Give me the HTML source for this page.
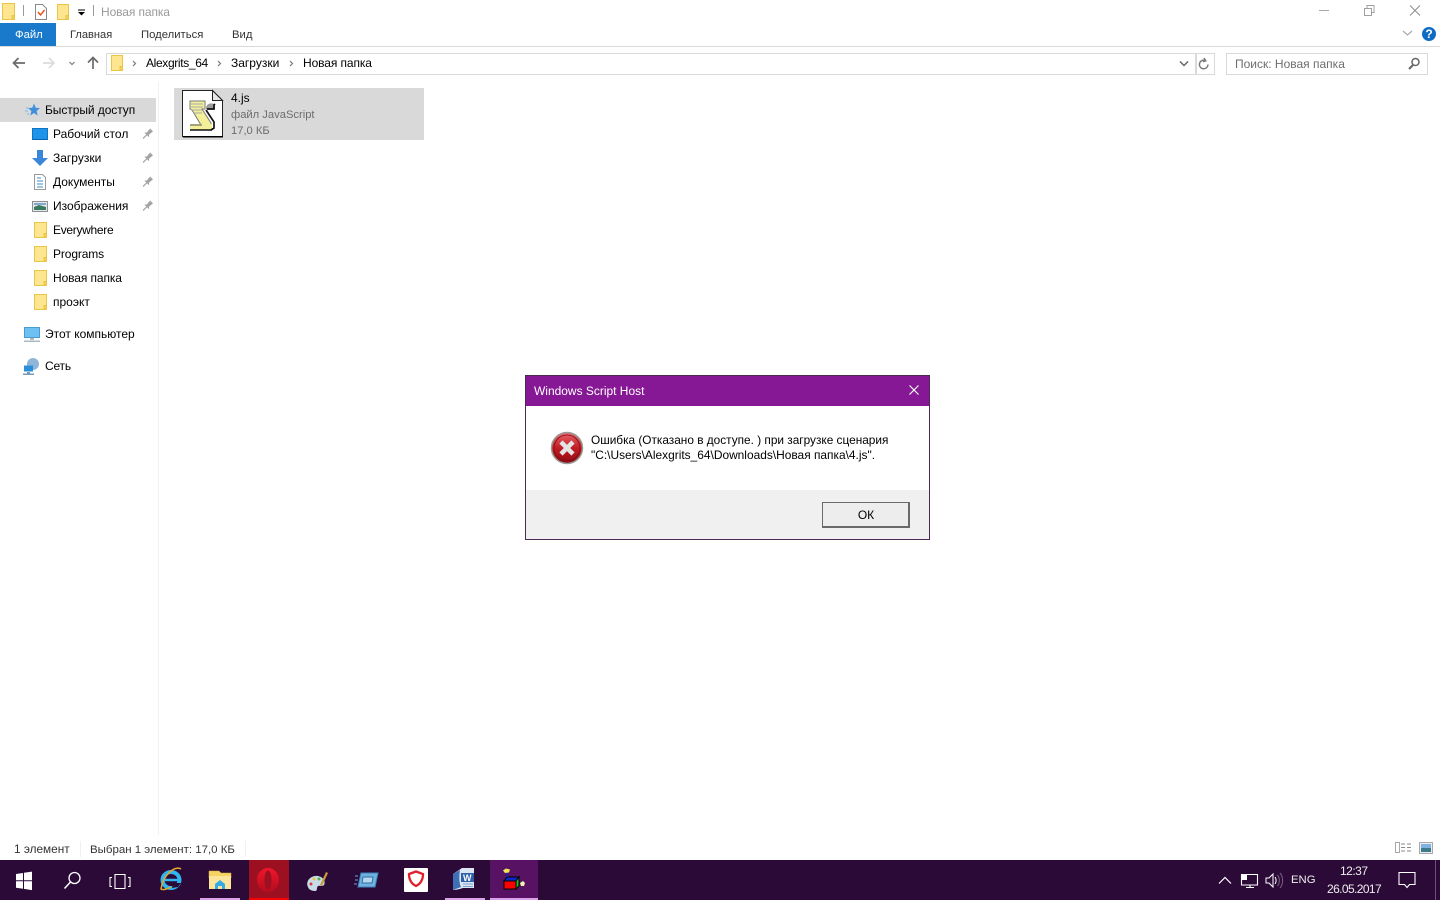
<!DOCTYPE html>
<html lang="ru"><head><meta charset="utf-8"><title>Новая папка</title>
<style>
html,body{margin:0;padding:0;width:1440px;height:900px;overflow:hidden;background:#fff}
body{position:relative;font-family:"Liberation Sans","Noto Sans CJK SC",sans-serif;font-size:12px;color:#000}
.t{position:absolute;white-space:nowrap;line-height:16px;height:16px}
.b{position:absolute}
svg{position:absolute;overflow:visible}
</style></head><body>

<!-- title bar -->
<svg style="left:0;top:0" width="100" height="24"><path d="M2.500 3.500h12v16h-12z" fill="#fde68f" stroke="#e9c445"/><path d="M12 15.500h2.500v4H12z" fill="#f3d25c" stroke="#e9c445"/><path d="M23.500 5v11" stroke="#9a9a9a"/><path d="M35.500 4.500h7l4 4v11h-11z" fill="#fff" stroke="#8a8a8a"/><path d="M38 12l2.500 3 4-5" fill="none" stroke="#e8541e" stroke-width="1.500"/><path d="M57.500 4.500h11v15h-11z" fill="#fde68f" stroke="#e9c445"/><path d="M66 15.500h2.500v4H66z" fill="#f3d25c" stroke="#e9c445"/><path d="M78 10h7" stroke="#000"/><path d="M78 12h7l-3.500 3.500z" fill="#000"/><path d="M93.500 5v11" stroke="#9a9a9a"/></svg>
<div class="t" style="left:101px;top:4px;color:#9a9a9a;letter-spacing:-.1px">Новая папка</div>
<svg style="left:1310px;top:0" width="130" height="24"><path d="M9 10.500h10" stroke="#a8a8a8"/><path d="M54.500 8.500h7v7h-7z M57 8V5.500h7v7h-2.500" fill="none" stroke="#a0a0a0"/><path d="M100 5.500l10 10M110 5.500l-10 10" stroke="#8c8c8c"/></svg>

<!-- ribbon -->
<div class="b" style="left:0;top:23px;width:56px;height:23px;background:#1979ca"></div>
<div class="t" style="left:15px;top:27px;color:#fff;font-size:11.300px">Файл</div>
<div class="t" style="left:70px;top:27px;color:#333;font-size:11.100px">Главная</div>
<div class="t" style="left:141px;top:27px;color:#333;font-size:11.300px">Поделиться</div>
<div class="t" style="left:232px;top:27px;color:#333;font-size:11.300px">Вид</div>
<div class="b" style="left:0;top:46px;width:1440px;height:1px;background:#dadada"></div>
<svg style="left:1400px;top:25px" width="40" height="20"><path d="M3 6l4.500 4L12 6" fill="none" stroke="#a8a8a8" stroke-width="1.200"/><circle cx="29" cy="9" r="7" fill="#0f6cc4"/></svg>
<div class="t" style="left:1425px;top:26px;color:#fff;font-weight:bold;font-size:12px;width:8px;text-align:center">?</div>

<!-- nav -->
<svg style="left:0;top:50px" width="105" height="26"><path d="M25 13H14M18.500 8L13.500 13l5 5" fill="none" stroke="#6b6b6b" stroke-width="1.700"/><path d="M43 13h10M49 8l5 5-5 5" fill="none" stroke="#dcdcdc" stroke-width="1.700"/><path d="M69.500 12l2.500 2.500 2.500-2.500" fill="none" stroke="#8a8a8a" stroke-width="1.300"/><path d="M93 19V8M88 12.500L93 7.500l5 5" fill="none" stroke="#6b6b6b" stroke-width="1.700"/></svg>
<div class="b" style="left:106px;top:53px;width:1089px;height:20px;border:1px solid #d9d9d9"></div>
<div class="b" style="left:1195px;top:53px;width:18px;height:20px;border:1px solid #d9d9d9"></div>
<svg style="left:110px;top:53px" width="30" height="22"><path d="M1.500 2.500h11v15h-11z" fill="#fde68f" stroke="#e9c445"/><path d="M10 13.500h2.500v4H10z" fill="#f3d25c" stroke="#e9c445"/><path d="M23 8l2.500 2.500L23 13" fill="none" stroke="#7a7a7a" stroke-width="1.200"/></svg>
<div class="t" style="left:146px;top:55px;letter-spacing:-.35px">Alexgrits_64</div>
<svg style="left:215px;top:53px" width="10" height="22"><path d="M3 8l2.500 2.500L3 13" fill="none" stroke="#7a7a7a" stroke-width="1.200"/></svg>
<div class="t" style="left:231px;top:55px">Загрузки</div>
<svg style="left:287px;top:53px" width="10" height="22"><path d="M3 8l2.500 2.500L3 13" fill="none" stroke="#7a7a7a" stroke-width="1.200"/></svg>
<div class="t" style="left:303px;top:55px;letter-spacing:-.1px">Новая папка</div>
<svg style="left:1178px;top:55px" width="34" height="20"><path d="M2 6.500l4 4 4-4" fill="none" stroke="#666" stroke-width="1.500"/><path d="M30 9.500a4.300 4.300 0 1 1-2.200-3.800M26 3l1.800 2.800-2.800 1" fill="none" stroke="#7a7a7a" stroke-width="1.400"/></svg>
<div class="b" style="left:1226px;top:53px;width:200px;height:20px;border:1px solid #d9d9d9"></div>
<div class="t" style="left:1235px;top:56px;color:#6d6d6d;font-size:12px">Поиск: Новая папка</div>
<svg style="left:1405px;top:56px" width="18" height="16"><circle cx="10.500" cy="6" r="3.500" fill="none" stroke="#666" stroke-width="1.500"/><path d="M8 9l-4 4" stroke="#666" stroke-width="2"/></svg>

<!-- sidebar -->
<div class="b" style="left:158px;top:82px;width:1px;height:753px;background:#f0f0f0"></div>
<div class="b" style="left:0;top:98px;width:156px;height:24px;background:#d9d9d9"></div>
<svg style="left:25px;top:102px" width="16" height="16"><path d="M9 1.500l1.700 4.300 4.300.3-3.400 2.900 1.100 4.500L9 11l-3.700 2.500 1.100-4.500L3 6.100l4.300-.3z" fill="#3f8fdc"/><path d="M1 6h3M0 9h3M2 12h2" stroke="#7fb5e6"/></svg>
<div class="t" style="left:45px;top:102px;letter-spacing:-.07px">Быстрый доступ</div>

<svg style="left:0;top:122px" width="156" height="196">
<path d="M32.500 6.500h15v11h-15z" fill="#1d94ea" stroke="#0f74c4"/><path d="M33 17h14v1H33z" fill="#0c5fa6"/>
<path d="M37 28h6v8h5l-8 8-8-8h5z" fill="#3a86d8"/>
<path d="M34.500 52.500h8l3 3v12h-11z" fill="#fff" stroke="#9a9a9a"/><path d="M37 56h4M37 59h6M37 62h6M37 65h6" stroke="#3f8fc9"/>
<path d="M32.500 79.500h15v10h-15z" fill="#dfe9f0" stroke="#8f8f8f"/><path d="M34 85l5-2 7 2v3H34z" fill="#3c7a5f"/><path d="M34 81h12v2H34z" fill="#86a9c9"/>
<g fill="#fde68f" stroke="#e9c445"><path d="M34.500 100.500h12v15h-12z"/><path d="M34.500 124.500h12v15h-12z"/><path d="M34.500 148.500h12v15h-12z"/><path d="M34.500 172.500h12v15h-12z"/></g>
<g fill="#f3d25c" stroke="#e9c445"><path d="M44 111.500h2.500v4H44z"/><path d="M44 135.500h2.500v4H44z"/><path d="M44 159.500h2.500v4H44z"/><path d="M44 183.500h2.500v4H44z"/></g>
<g fill="#a4a4a4" stroke="#a4a4a4">
<g transform="translate(148 11.500) rotate(45)"><path d="M-2-5h4v1l-.5 4 1.500 1.500v.5h-6v-.5L-1.500 0-2-4z" stroke="none"/><path d="M0 2v5" stroke-width="1.200"/></g>
<g transform="translate(148 35.500) rotate(45)"><path d="M-2-5h4v1l-.5 4 1.500 1.500v.5h-6v-.5L-1.500 0-2-4z" stroke="none"/><path d="M0 2v5" stroke-width="1.200"/></g>
<g transform="translate(148 59.500) rotate(45)"><path d="M-2-5h4v1l-.5 4 1.500 1.500v.5h-6v-.5L-1.500 0-2-4z" stroke="none"/><path d="M0 2v5" stroke-width="1.200"/></g>
<g transform="translate(148 83.500) rotate(45)"><path d="M-2-5h4v1l-.5 4 1.500 1.500v.5h-6v-.5L-1.500 0-2-4z" stroke="none"/><path d="M0 2v5" stroke-width="1.200"/></g>
</g>
</svg>
<div class="t" style="left:53px;top:126px">Рабочий стол</div>
<div class="t" style="left:53px;top:150px">Загрузки</div>
<div class="t" style="left:53px;top:174px">Документы</div>
<div class="t" style="left:53px;top:198px">Изображения</div>
<div class="t" style="left:53px;top:222px;letter-spacing:-.3px">Everywhere</div>
<div class="t" style="left:53px;top:246px;letter-spacing:-.12px">Programs</div>
<div class="t" style="left:53px;top:270px;letter-spacing:-.1px">Новая папка</div>
<div class="t" style="left:53px;top:294px">проэкт</div>
<svg style="left:22px;top:325px" width="20" height="18"><path d="M2.500 2.500h15v10h-15z" fill="#6cc0f2" stroke="#4a9bd4"/><path d="M8 13h4v2H8zM2 15.500h16v1.500H2z" fill="#aab8c4"/></svg>
<div class="t" style="left:45px;top:326px">Этот компьютер</div>
<svg style="left:22px;top:357px" width="20" height="18"><circle cx="11" cy="7" r="6" fill="#8fb6d8"/><path d="M2 8.500h9v6H2z" fill="#2b8ed8"/><path d="M5 15h3v1.500H5zM1 16.500h11V18H1z" fill="#7d9ab4"/></svg>
<div class="t" style="left:45px;top:358px;letter-spacing:-.2px">Сеть</div>

<!-- selected file -->
<div class="b" style="left:174px;top:88px;width:250px;height:52px;background:#d9d9d9"></div>
<svg style="left:182px;top:90px" width="42" height="48">
<path d="M.500.500h30l10 10v36H.500z" fill="#fff" stroke="#222"/><path d="M1 46h40v1.500H1z" fill="#000"/><path d="M30.500.500v10h10z" fill="#e8e8e8" stroke="#222"/>
<path d="M8 11h15v8h-3l9 14v2H19l-9-15-2-1z" fill="#f4f09a" stroke="#777"/>
<path d="M8 34h22v6H8z" fill="#f4f09a"/>
<path d="M9 14h12M9 17h12M9 20h11M11 23h9" stroke="#a8a8a8"/>
<path d="M8 40h22" stroke="#111" stroke-width="1.500"/>
<path d="M8 35h12" stroke="#555"/>
<path d="M24 18c0-5 7-6 9-3v4h-9z" fill="#9c9c9c"/>
<path d="M33 14l-1 1v4h-7M24 20l8 12v6l-3 2" fill="none" stroke="#111" stroke-width="1.700"/>
</svg>
<div class="t" style="left:231px;top:90px">4.js</div>
<div class="t" style="left:231px;top:107px;color:#6d6d6d;font-size:11.200px">файл JavaScript</div>
<div class="t" style="left:231px;top:123px;color:#6d6d6d;font-size:11.200px">17,0 КБ</div>

<!-- dialog -->
<div class="b" style="left:525px;top:375px;width:403px;height:163px;border:1px solid #4a2a52;background:#fff"></div>
<div class="b" style="left:526px;top:376px;width:403px;height:30px;background:#871895"></div>
<div class="t" style="left:534px;top:383px;color:#fff;font-size:11.970px">Windows Script Host</div>
<svg style="left:905px;top:381px" width="18" height="18"><path d="M4.500 4.500l9 9M13.500 4.500l-9 9" stroke="#fff" stroke-width="1.200"/></svg>
<svg style="left:550px;top:431px" width="34" height="34"><defs><linearGradient id="r" x1="0" y1="0" x2="0" y2="1"><stop offset="0" stop-color="#e8666a"/><stop offset=".5" stop-color="#c21c25"/><stop offset="1" stop-color="#8f0a12"/></linearGradient></defs><circle cx="17" cy="17" r="15.500" fill="url(#r)" stroke="#9a9a9a" stroke-width="1.500"/><circle cx="17" cy="17" r="13" fill="none" stroke="#7c1015" stroke-width=".8"/><path d="M11 11l12 12M23 11L11 23" stroke="#e4e4e4" stroke-width="4.500"/></svg>
<div class="t" style="left:591px;top:432px;font-size:11.830px">Ошибка (Отказано в доступе. ) при загрузке сценария</div>
<div class="t" style="left:591px;top:447px;font-size:11.930px">"C:\Users\Alexgrits_64\Downloads\Новая папка\4.js".</div>
<div class="b" style="left:526px;top:490px;width:403px;height:49px;background:#f0f0f0"></div>
<div class="b" style="left:822px;top:502px;width:85px;height:23px;border:1px solid #6a6a6a;border-width:1px 2px 2px 1px;background:#ededed"></div>
<div class="t" style="left:822px;top:507px;width:88px;text-align:center">ОК</div>

<!-- status bar -->
<div class="t" style="left:14px;top:841px;color:#333;font-size:11.800px">1 элемент</div>
<div class="b" style="left:80px;top:841px;width:1px;height:16px;background:#f0f0f0"></div>
<div class="t" style="left:90px;top:842px;color:#333;font-size:11.480px">Выбран 1 элемент: 17,0 КБ</div>
<div class="b" style="left:245px;top:841px;width:1px;height:16px;background:#f0f0f0"></div>
<svg style="left:1390px;top:838px" width="50" height="20"><path d="M5.500 4.500h4v10h-4z" fill="#fff" stroke="#a8a8a8"/><path d="M11 6h4M17 6h4M11 9.500h4M17 9.500h4M11 13h4M17 13h4" stroke="#8a8a8a"/><path d="M29.500 4.500h13v11h-13z" fill="#e8eef2" stroke="#a8a8a8"/><path d="M31 6h10v4H31z" fill="#7fb2e0"/><path d="M31 10h10v4H31z" fill="#3d7a8a"/></svg>

<!-- taskbar -->
<div class="b" style="left:0;top:860px;width:1440px;height:40px;background:#2b0a38"></div>
<div class="b" style="left:249px;top:860px;width:40px;height:40px;background:#9c1021"></div>
<div class="b" style="left:249px;top:898px;width:40px;height:2px;background:#f80000"></div>
<div class="b" style="left:490px;top:860px;width:48px;height:40px;background:#571263"></div>
<div class="b" style="left:200px;top:898px;width:40px;height:2px;background:#dca0e8"></div>
<div class="b" style="left:445px;top:898px;width:40px;height:2px;background:#dca0e8"></div>
<div class="b" style="left:490px;top:898px;width:48px;height:2px;background:#dca0e8"></div>
<svg style="left:0;top:860px" width="540" height="40">
<defs><linearGradient id="o" x1="0" y1="0" x2="0" y2="1"><stop offset="0" stop-color="#f0162a"/><stop offset="1" stop-color="#b40c1e"/></linearGradient></defs>
<path d="M16 14l7-1v7.300h-7zM24 12.800l8-1.200v8.700h-8zM16 21.300h7v7.400l-7-1zM24 21.300h8v8.800l-8-1.200z" fill="#fff"/>
<circle cx="74.500" cy="18" r="5.500" fill="none" stroke="#fff" stroke-width="1.300"/><path d="M70.500 22L64.500 28.500" stroke="#fff" stroke-width="1.500"/>
<path d="M115 14.500h10v14h-10z M112 17.500h-2v9h2 M128 17.500h2v9h-2" fill="none" stroke="#fff" stroke-width="1.100"/>
<g><ellipse cx="171" cy="20" rx="8.500" ry="8" fill="none" stroke="#31b5ee" stroke-width="4"/><path d="M164 20h14" stroke="#31b5ee" stroke-width="2.500"/><path d="M173 23h8l-3 4-6 1z" fill="#2b0a38"/><path d="M181 9c-6-4-18 6-20 20 3 2 8-1 10-2" fill="none" stroke="#e0a92c" stroke-width="1.500"/></g>
<path d="M209 11h10l2 2h10v5h-22z" fill="#f5d463" stroke="#d9b343" stroke-width=".5"/><path d="M209 16h22v13h-22z" fill="#fbe59a"/><path d="M215 24l5-4 5 4v5h-3v-3h-4v3h-3z" fill="#36a9e8"/>
<path d="M268 8c6 0 11 5.400 11 12s-5 12-11 12-11-5.400-11-12 5-12 11-12zm0 2.500c-2.200 0-3.500 4.200-3.500 9.500s1.300 9.500 3.500 9.500 3.500-4.200 3.500-9.500-1.300-9.500-3.500-9.500z" fill="url(#o)"/>
<path d="M308 27c-3-6 3-12 10-11 5 1 8 5 6 9-2 2-4 0-6 1-2 2 0 5-3 5-3 0-6-1-7-4z" fill="#c8dce8"/><path d="M320 25l6-13 2 1-6 13z" fill="#c99a3a"/><circle cx="314" cy="19" r="1.500" fill="#e8c93a"/><circle cx="311" cy="24" r="1.500" fill="#d83c3c"/><circle cx="319" cy="19" r="1.500" fill="#5cb04c"/>
<path d="M361 13h17l-3 14h-17z" fill="#6fb2e2" stroke="#3f83b8"/><path d="M363 17h10l-1 6h-10z" fill="#b4d6ee" stroke="#2f6fa2"/><path d="M355 16h3M355 20h3M354 24h3" stroke="#6fa6d2"/>
<rect x="404" y="8" width="24" height="24" rx="1" fill="#fff"/><path d="M409 14l7-2.500 7 2.500c0 6-3 10-7 12-4-2-7-6-7-12z" fill="none" stroke="#e0202c" stroke-width="2.300"/>
<path d="M453 14l9-6h12v20h-11c-3 1-7 2-10 2z" fill="#dbe6f3"/><path d="M453 14l7-4c-1 6-1 13 1 17l-8 3z" fill="#3f6fb4"/><rect x="461" y="13" width="13" height="9" fill="#2d62a8"/><text x="463" y="21" font-family="Liberation Sans" font-size="9" font-weight="bold" fill="#fff">W</text><path d="M463 24h10M463 26.500h10" stroke="#7fa0c8"/>
<path d="M504 21h12v8h-12z" fill="#f00" stroke="#000"/><path d="M504 21l3-4h12l-3 4z" fill="#0a28c8" stroke="#000"/><path d="M516 21l3-4v9l-3 3z" fill="#18c018" stroke="#000"/><path d="M507 17v-5" stroke="#0a28c8"/><path d="M503 10.500l3-2 4 1-1 3-4 .5z" fill="#f4e45a"/><path d="M520 23l3-2 2 2-1 3h-3z" fill="#f4f0b0"/>
</svg>
<svg style="left:1210px;top:860px" width="230" height="40"><path d="M9 23.500l6-6 6 6" fill="none" stroke="#fff" stroke-width="1.200"/><path d="M31.500 14.500h16v10.500h-16zM40 25v2.500M36 27.500h8" fill="none" stroke="#fff" stroke-width="1.100"/><path d="M32 15h5v5h-5z" fill="#fff"/><path d="M56 18h3l4-4v13l-4-4h-3z" fill="none" stroke="#fff"/><path d="M65 17c1.500 2 1.500 5 0 7" fill="none" stroke="#fff"/><path d="M67.500 15c2.500 3 2.500 8 0 11M70 13c3.500 4 3.500 11 0 15" fill="none" stroke="#7c5f88"/><path d="M189 12.500h16v12h-5.500l-2.500 3-2.500-3H189z" fill="none" stroke="#fff" stroke-width="1.100"/></svg>
<div class="b" style="left:1435px;top:860px;width:1px;height:40px;background:#6c5176"></div>
<div class="t" style="left:1291px;top:872px;color:#eee;font-size:11.300px">ENG</div>
<div class="t" style="left:1340px;top:863px;color:#eee;letter-spacing:-.5px">12:37</div>
<div class="t" style="left:1327px;top:881px;color:#eee;letter-spacing:-.6px">26.05.2017</div>
</body></html>
